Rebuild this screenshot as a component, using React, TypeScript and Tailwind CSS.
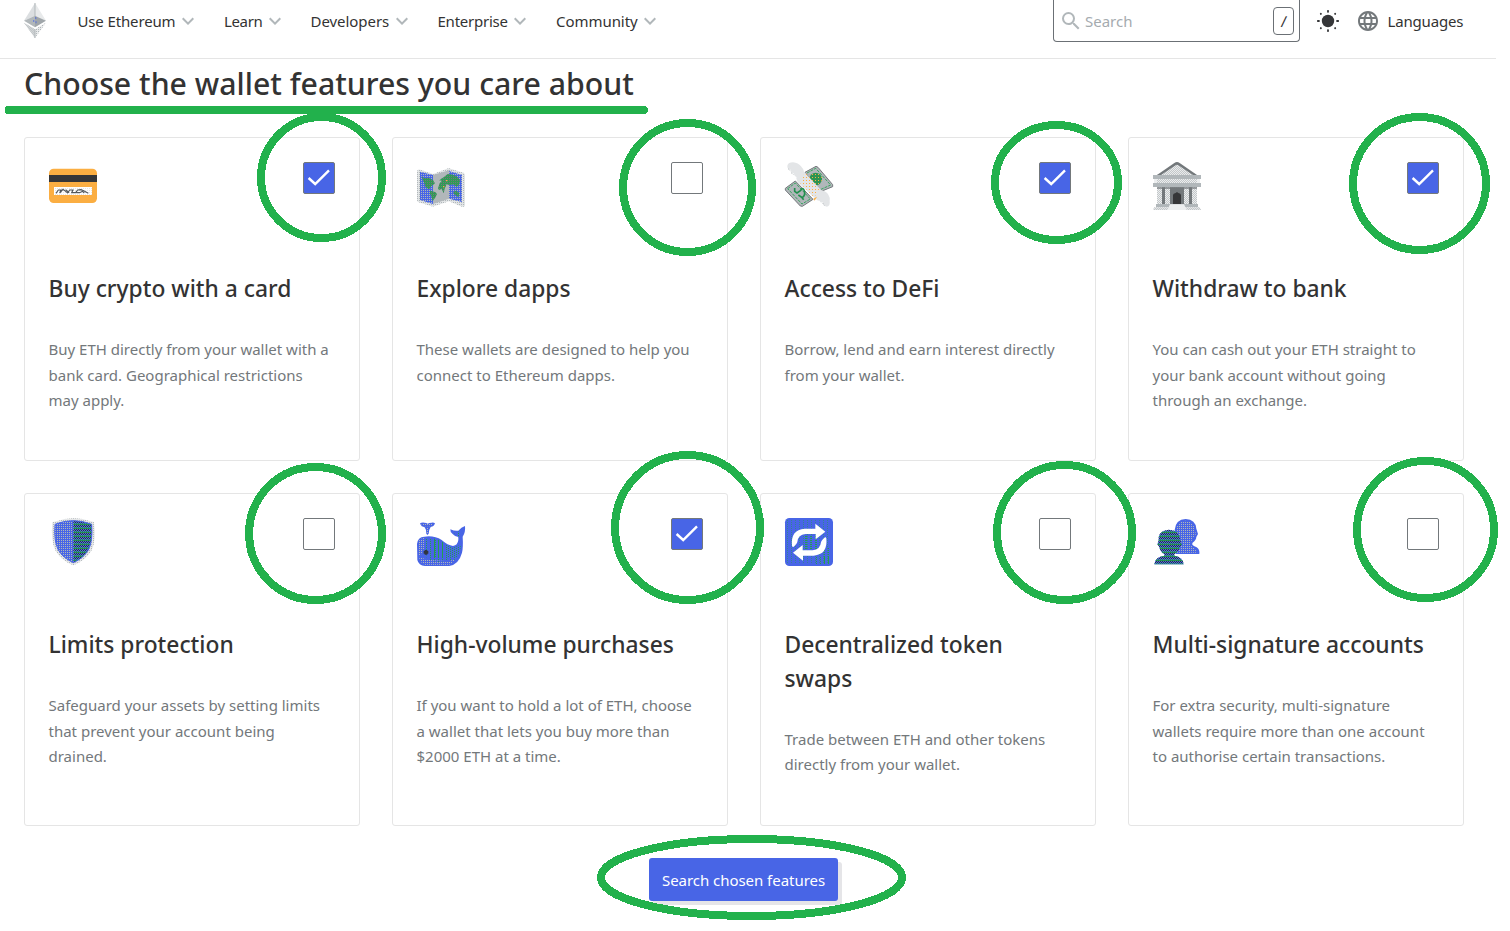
import type { ReactNode } from "react";
import { MdExpandMore, MdLanguage, MdSearch } from "react-icons/md";

/* Dot patterns shared by the emoji artwork (3 units = 1 pixel). */
function Dots({ id, color, size = 6 }: { id: string; color: string; size?: number }) {
  return (
    <pattern id={id} width={size} height={size} patternUnits="userSpaceOnUse">
      <rect width="3" height="3" fill={color} />
    </pattern>
  );
}

function Check({ id, color }: { id: string; color: string }) {
  return (
    <pattern id={id} width="6" height="6" patternUnits="userSpaceOnUse">
      <path d="M0 0h3v3H0zM3 3h3v3H3z" fill={color} />
    </pattern>
  );
}

function SharedPatterns() {
  return (
    <svg className="absolute h-0 w-0" aria-hidden="true">
      <defs>
        <Dots id="dot-gray" color="#b1b7ba" />
        <Dots id="dot-orange" color="#fbae42" size={9} />
        <Dots id="dot-steel" color="#73787b" />
        <Check id="check-gray" color="#c3c7c9" />
        <pattern id="bust-dark" width="6" height="12" patternUnits="userSpaceOnUse">
          <rect width="3" height="3" fill="#303540" />
          <rect x="3" y="3" width="3" height="3" fill="#22904e" />
          <rect y="6" width="3" height="3" fill="#22904e" />
          <rect x="3" y="6" width="3" height="3" fill="#22904e" />
          <rect x="3" y="9" width="3" height="3" fill="#303540" />
        </pattern>
      </defs>
    </svg>
  );
}

/* Dashed vertical columns of green pixels. */
function GreenColumns({ from, to, step, y1, y2 }: { from: number; to: number; step: number; y1: number; y2: number }) {
  const xs: number[] = [];
  for (let x = from; x <= to; x += step) xs.push(x);
  return (
    <g stroke="#22a04e" strokeWidth="3" strokeDasharray="3 3">
      {xs.map((x) => (
        <path key={x} d={`M${x + 1.5} ${y1}V${y2}`} />
      ))}
    </g>
  );
}

function Emoji({ children }: { children: ReactNode }) {
  return (
    <svg className="block size-12 overflow-visible" viewBox="0 0 144 144" aria-hidden="true">
      {children}
    </svg>
  );
}

const CardIcon = () => (
  <Emoji>
    <rect y="20" width="144" height="103" rx="14" fill="#fbae42" />
    <rect y="39" width="144" height="21" fill="#353638" />
    <rect x="15" y="75" width="114" height="24" fill="#fff" />
    <rect x="15" y="75" width="114" height="24" fill="url(#dot-gray)" opacity=".35" />
    <path
      d="M21 94L28 84H36L32 93L42 82L50 88L56 93L62 84H72L68 92H80L86 84L96 83L104 86L118 94M50 83L60 92M82 92H92L100 88L106 93"
      fill="none"
      stroke="#53585b"
      strokeWidth="3.4"
    />
  </Emoji>
);

const MAP_SHEET =
  "M2 24Q4 21 10 23L48 36L94 19Q97 18 101 20L139 32Q144 34 144 40V130Q143 136 135 134L96 118L51 133Q47 135 42 132L5 121Q0 119 0 114V30Z";
const MAP_LAND =
  "M14 44L24 49L34 47L48 55L54 64L42 73L36 82L26 74L20 58ZM40 86L54 90L60 96L54 108L47 117L43 101L38 95ZM63 79L68 64L75 56L67 55L82 44L92 36L106 38L118 42L129 54L126 68L119 74L109 67L96 69L89 66L83 80L80 94L74 81L66 84ZM109 90L117 86L127 93L124 105L112 97Z";

const MapIcon = () => (
  <Emoji>
    <path d={MAP_SHEET} fill="#e2e5e6" />
    <path d={MAP_SHEET} fill="url(#dot-gray)" />
    <path d="M9 29L48 39V126L9 114Z" fill="#4865e6" />
    <path d="M48 39L96 25V110L48 126Z" fill="#b1b7ba" />
    <path d="M96 27L135 39V120L96 110Z" fill="#4865e6" />
    <path d="M9 29L48 39V126L9 114ZM96 27L135 39V120L96 110Z" fill="url(#dot-gray)" />
    <path d={MAP_LAND} fill="#2f9c55" />
    <path d={MAP_LAND} fill="url(#dot-steel)" />
    <path d="M87 54h4v4h-4zM78 72h4v4h-4z" fill="#fbae42" />
  </Emoji>
);

const MoneyIcon = () => (
  <Emoji>
    <g stroke="#73787b" strokeWidth="3" strokeLinejoin="round">
      <path d="M60 31L93 13L99 16L143 68V74L106 89Z" fill="#b1b7ba" />
      <path d="M1 79L31 57L84 112L52 133L46 132L1 84Z" fill="#b1b7ba" />
    </g>
    <path
      d="M66 33L92 19L137 69L108 82M8 80L31 63L76 111L51 126Z"
      fill="none"
      stroke="#22a04e"
      strokeWidth="2.5"
      strokeDasharray="9 3"
    />
    <ellipse cx="92" cy="51" rx="19" ry="19" fill="#2c9450" />
    <ellipse cx="92" cy="51" rx="19" ry="19" fill="url(#dot-orange)" />
    <path
      d="M29 78V88L36 93L46 86Q54 74 58 86Q62 99 52 107L40 99M51 107L56 113"
      fill="none"
      stroke="#22904e"
      strokeWidth="5"
    />
    <path
      d="M7 11Q10 1 24 1Q40 3 48 13Q55 20 57 29L108 84Q124 87 130 98Q137 108 134 118Q136 132 126 134Q116 134 113 121Q106 124 104 116Q97 117 92 110L85 104L38 60Q31 44 36 46Q26 42 27 34Q17 33 17 23Q6 21 7 11Z"
      fill="#e3e5e7"
    />
    <path d="M52 40L66 36L104 84L87 106L46 64Z" fill="url(#dot-orange)" />
    <path d="M85 110L96 104L89 116Z" fill="#fbae42" />
    <path d="M9 20L17 27M18 32L27 38M113 123L119 132" stroke="#b1b7ba" strokeWidth="3" strokeDasharray="3 3" />
  </Emoji>
);

const BankIcon = () => (
  <Emoji>
    <path d="M72 5L132 39H12Z" fill="#e9ebec" />
    <path d="M72 5L132 39H12Z" fill="url(#check-gray)" />
    <path d="M12 39L64 3Q72-3 80 3L132 39H120L76 10Q72 7 68 10L24 39Z" fill="#73787b" />
    <rect x="3" y="50" width="138" height="77" fill="#eceeef" />
    <rect x="12" y="50" width="120" height="77" fill="url(#check-gray)" />
    <path d="M0 39h144v12H0zM0 63h144v12H0z" fill="#b1b7ba" />
    <path d="M0 75h12v54H0zM132 75h12v54h-12z" fill="#fff" />
    <path d="M12 75h120v6H12z" fill="#73787b" opacity=".65" />
    <path d="M27 76h9v50h-9zM51 76h42v51H51zM108 76h9v50h-9z" fill="#73787b" />
    <path d="M60 127V99Q60 95 68 93L72 90L76 93Q84 95 84 99V127Z" fill="#353638" />
    <path d="M9 126h126v10H9z" fill="#b1b7ba" />
    <path d="M4 136h136l4 8H0z" fill="#e3e5e7" />
    <path d="M4 136h136l4 8H0z" fill="url(#check-gray)" />
    <path d="M51 127h42l8 17H43z" fill="#eceeef" />
  </Emoji>
);

const SHIELD =
  "M10 13Q14 11 25 9Q45 2 73 1Q102 2 122 9Q130 10 135 13Q142 68 128 97Q110 128 73 142Q36 128 19 97Q5 68 10 13Z";

const ShieldIcon = () => (
  <Emoji>
    <path d={SHIELD} fill="#e5e7e8" />
    <path d={SHIELD} fill="url(#dot-gray)" />
    <path d="M18 19Q44 8 73 8V134Q42 120 28 96Q14 70 18 19Z" fill="#4865e6" />
    <path d="M18 19Q44 8 73 8V134Q42 120 28 96Q14 70 18 19Z" fill="url(#dot-gray)" />
    <path d="M73 8Q102 8 128 19Q132 70 118 96Q104 120 73 134Z" fill="#4865e6" />
    <path d="M73 8Q102 8 128 19Q132 70 118 96Q104 120 73 134Z" fill="url(#bust-dark)" />
    <path
      d="M18 19Q44 8 73 8Q102 8 128 19Q132 70 118 96Q104 120 73 134Q42 120 28 96Q14 70 18 19Z"
      fill="none"
      stroke="#4865e6"
      strokeWidth="3"
    />
  </Emoji>
);

const WHALE =
  "M0 78Q2 57 22 56Q52 52 74 66Q92 82 108 84Q122 82 124 66V57Q113 55 107 48Q99 42 100 34Q114 40 124 38Q133 27 144 24Q146 43 137 56Q139 86 135 104Q126 138 97 144H24Q5 143 1 126Z";

const WhaleIcon = () => (
  <Emoji>
    <clipPath id="whale-back">
      <path d="M24 62Q55 58 74 70Q96 90 112 88L132 80Q130 110 112 125L60 132L30 126ZM108 42L130 40L136 48L130 66L124 56Z" />
    </clipPath>
    <path
      d="M9 16Q14 13 22 14Q29 14 32 17Q36 14 44 14Q50 13 54 16Q52 25 41 27Q36 34 35 47L31 51L28 47Q28 34 23 28Q12 26 9 16Z"
      fill="#4865e6"
    />
    <path d="M14 17h34v8H14zM30 27h5v18h-5z" fill="url(#dot-gray)" />
    <path d={WHALE} fill="#4865e6" />
    <g clipPath="url(#whale-back)">
      <GreenColumns from={27} to={135} step={12} y1={39} y2={132} />
      <GreenColumns from={51} to={78} step={12} y1={60} y2={120} />
      <GreenColumns from={54} to={54} step={12} y1={66} y2={120} />
      <GreenColumns from={93} to={129} step={12} y1={84} y2={117} />
    </g>
    <path
      d="M3 72Q10 60 22 60V90L12 110L3 118ZM6 118L38 126L96 130L116 122Q106 140 94 140H24Q10 138 6 118Z"
      fill="url(#dot-gray)"
    />
    <path d="M23 96h8v3h3v8h-3v3h-8v-3h-3v-8h3z" fill="#303540" />
  </Emoji>
);

const SWAP_ARROW = "M21 84Q16 35 59 32H91V17L121 41L92 64V48H62Q39 50 37 72Q36 78 24 88Z";

const SwapIcon = () => (
  <Emoji>
    <rect width="144" height="144" rx="13" fill="#4865e6" />
    <g opacity=".55">
      <GreenColumns from={6} to={135} step={12} y1={6} y2={138} />
    </g>
    <GreenColumns from={60} to={99} step={15} y1={54} y2={94} />
    <GreenColumns from={63} to={99} step={15} y1={54} y2={94} />
    <GreenColumns from={93} to={135} step={12} y1={117} y2={138} />
    <GreenColumns from={117} to={135} step={12} y1={90} y2={138} />
    <g fill="#fff">
      <path d={SWAP_ARROW} />
      <path d={SWAP_ARROW} transform="rotate(180 72.5 72.5)" />
    </g>
  </Emoji>
);

const BACK = "M65 36Q68 4 98 3Q128 5 130 32L135 48L130 57Q130 66 118 75V80Q121 84 131 88Q141 95 139 108H68Z";
const FRONT =
  "M13 79L17 68Q14 38 48 35Q82 38 81 66L87 79Q81 85 80 91Q74 104 64 109V113Q90 116 92 139H4Q6 116 34 113V109Q22 102 20 91Q18 83 13 79Z";

const BustsIcon = () => (
  <Emoji>
    <path d={BACK} fill="#4865e6" />
    <path d="M70 34Q74 8 98 8Q122 10 125 34L129 48Q112 68 113 82Q128 92 133 104H72Z" fill="url(#dot-gray)" />
    <path d={FRONT} fill="#4865e6" />
    <path d={FRONT} fill="url(#bust-dark)" />
  </Emoji>
);

function EthLogo() {
  return (
    <svg className="h-[35px] w-[22px]" viewBox="0 0 66 105" aria-label="Ethereum">
      <path d="M33 0L0 53L33 38Z" fill="#dcdfe1" />
      <path d="M33 0L66 53L33 38Z" fill="#e8eaeb" />
      <path d="M33 38L0 53L33 73Z" fill="#b1b7ba" />
      <path d="M33 38L66 53L33 73Z" fill="#a0a6aa" />
      <path d="M33 42h4v6h-4zM27 51h4v6h-4zM34 55h4v6h-4z" fill="#4865e6" opacity=".6" />
      <path d="M0 59L33 79V105Z" fill="#d0d4d6" />
      <path d="M0 59L33 79V105Z" fill="url(#check-gray)" />
      <path d="M66 59L33 79V105Z" fill="#e8eaeb" />
      <path d="M66 59L33 79V105Z" fill="url(#dot-gray)" />
      <path d="M33 0V40M33 79V105" stroke="#b1b7ba" strokeWidth="3" />
    </svg>
  );
}

function SunIcon() {
  return (
    <svg className="size-[22px]" viewBox="0 0 22 22" fill="#353638" aria-hidden="true">
      <circle cx="11" cy="11" r="6.2" />
      {[0, 45, 90, 135, 180, 225, 270, 315].map((a) => (
        <rect
          key={a}
          x="10.1"
          y="0"
          width="1.8"
          height={a % 90 ? 1.8 : 2.8}
          rx=".7"
          transform={`rotate(${a} 11 11)`}
        />
      ))}
    </svg>
  );
}

function NavItem({ label, className }: { label: string; className: string }) {
  return (
    <a className={`flex h-6 shrink-0 items-center whitespace-nowrap ${className}`}>
      {label}
      <MdExpandMore className="ml-[0.5px] size-6 shrink-0 text-[#b1b7ba]" />
    </a>
  );
}

function Header() {
  return (
    <header className="flex h-[59px] w-[1496px] items-start border-b border-[#e5e5e5] pl-6 text-[15px] text-[#333]">
      <div className="mt-[3px] w-[53.5px]">
        <EthLogo />
      </div>
      <nav className="mt-[9px] flex">
        <NavItem label="Use Ethereum" className="w-[146.5px] tracking-[-0.14px]" />
        <NavItem label="Learn" className="w-[86.5px] tracking-[-0.36px]" />
        <NavItem label="Developers" className="w-[127px] tracking-[-0.05px]" />
        <NavItem label="Enterprise" className="w-[118.5px] tracking-[-0.24px]" />
        <NavItem label="Community" className="w-[110px] tracking-[-0.05px]" />
      </nav>
      <div className="ml-auto flex h-[42px] w-[247px] items-center rounded-b border border-t-0 border-[#6b7075] pr-[5px] pl-[5px]">
        <MdSearch className="size-6 text-[#b1b7ba]" />
        <span className="mt-0.5 ml-0.5 flex-1 text-[#a5abaf]">Search</span>
        <kbd className="mt-px flex h-7 w-[21px] items-center justify-center rounded border border-[#6b7075] pt-px font-['Noto_Sans',sans-serif] text-[15px]">
          <span className="inline-block -skew-x-6">/</span>
        </kbd>
      </div>
      <div className="mt-[9px] mr-8 ml-[17px] flex h-6 items-center">
        <SunIcon />
        <MdLanguage className="ml-[17px] size-6 text-[#73787b]" />
        <span className="ml-[7.5px] w-[76.5px] tracking-[-0.18px]">Languages</span>
      </div>
    </header>
  );
}

function Checkbox({ checked }: { checked: boolean }) {
  return (
    <span
      role="checkbox"
      aria-checked={checked}
      className={`flex size-8 items-center justify-center rounded-[2px] border border-[#73787b] ${checked ? "bg-[#4865e6]" : "bg-white"}`}
    >
      {checked && (
        <svg
          className="-mt-px h-[17px] w-[24px]"
          viewBox="0 0 24 17"
          fill="none"
          stroke="#fff"
          strokeWidth="2.4"
          aria-hidden="true"
        >
          <path d="M1.6 9L8.2 15L22 1.4" />
        </svg>
      )}
    </span>
  );
}

type Feature = { icon: ReactNode; title: string[]; lines: string[]; checked: boolean };

const features: Feature[] = [
  {
    icon: <CardIcon />,
    title: ["Buy crypto with a card"],
    lines: ["Buy ETH directly from your wallet with a", "bank card. Geographical restrictions", "may apply."],
    checked: true,
  },
  {
    icon: <MapIcon />,
    title: ["Explore dapps"],
    lines: ["These wallets are designed to help you", "connect to Ethereum dapps."],
    checked: false,
  },
  {
    icon: <MoneyIcon />,
    title: ["Access to DeFi"],
    lines: ["Borrow, lend and earn interest directly", "from your wallet."],
    checked: true,
  },
  {
    icon: <BankIcon />,
    title: ["Withdraw to bank"],
    lines: ["You can cash out your ETH straight to", "your bank account without going", "through an exchange."],
    checked: true,
  },
  {
    icon: <ShieldIcon />,
    title: ["Limits protection"],
    lines: ["Safeguard your assets by setting limits", "that prevent your account being", "drained."],
    checked: false,
  },
  {
    icon: <WhaleIcon />,
    title: ["High-volume purchases"],
    lines: ["If you want to hold a lot of ETH, choose", "a wallet that lets you buy more than", "$2000 ETH at a time."],
    checked: true,
  },
  {
    icon: <SwapIcon />,
    title: ["Decentralized token", "swaps"],
    lines: ["Trade between ETH and other tokens", "directly from your wallet."],
    checked: false,
  },
  {
    icon: <BustsIcon />,
    title: ["Multi-signature accounts"],
    lines: ["For extra security, multi-signature", "wallets require more than one account", "to authorise certain transactions."],
    checked: false,
  },
];

function FeatureCard({ icon, title, lines, checked }: Feature) {
  return (
    <article className="flex flex-col rounded-[3px] border border-[#e5e5e5] px-6 pt-6">
      <div className="flex items-start justify-between">
        {icon}
        <Checkbox checked={checked} />
      </div>
      <h3 className="mt-[62px] -ml-[0.5px] text-[22.8px] leading-[33.6px] font-medium whitespace-nowrap text-[#333]">
        {title.map((t) => (
          <span key={t} className="block">
            {t}
          </span>
        ))}
      </h3>
      <p className="mt-[31.6px] -ml-[0.5px] text-[15px] leading-[25.6px] whitespace-nowrap text-[#73787b]">
        {lines.map((l) => (
          <span key={l} className="block">
            {l}
          </span>
        ))}
      </p>
    </article>
  );
}

/* Hand-drawn highlights: [cx, cy, rx, ry] */
const rings = [
  [321.5, 177.5, 60.5, 60.5],
  [687.5, 187.5, 64.5, 64.5],
  [1056.5, 182.5, 61.5, 57.5],
  [1419.5, 183.5, 66.5, 66.5],
  [315.5, 533.5, 66.5, 66.5],
  [687.5, 527.5, 72.5, 72.5],
  [1064.5, 532.5, 67.5, 67.5],
  [1425.5, 529.5, 68.5, 68.5],
  [751.5, 877.5, 150.5, 38.5],
];

function Annotations() {
  return (
    <svg
      className="pointer-events-none absolute top-0 left-0"
      width="1510"
      height="931"
      fill="none"
      stroke="#22b14c"
      strokeWidth="8"
      shapeRendering="crispEdges"
      aria-hidden="true"
    >
      <path d="M8.5 110H644" strokeLinecap="round" />
      {rings.map(([cx, cy, rx, ry]) => (
        <ellipse key={`${cx}-${cy}`} cx={cx} cy={cy} rx={rx} ry={ry} />
      ))}
    </svg>
  );
}

export default function App() {
  return (
    <div className="relative h-[931px] w-[1510px] overflow-hidden bg-white font-['Noto_Sans','Open_Sans',sans-serif]">
      <SharedPatterns />
      <Header />
      <main className="px-6">
        <h2 className="h-[78px] text-[30.25px] leading-[50px] font-medium text-[#333]">
          Choose the wallet features you care about
        </h2>
        <section className="grid w-[1440px] grid-cols-4 grid-rows-[324px_333px] gap-8">
          {features.map((f) => (
            <FeatureCard key={f.title[0]} {...f} />
          ))}
        </section>
        <div className="mt-8 flex w-[1439px] justify-center">
          <button className="h-[43px] w-[189px] rounded-[3px] bg-[#4865e6] pt-0.5 text-[15px] tracking-[-0.04px] whitespace-nowrap text-white shadow-[4px_4px_0_#e5e5e8]">
            Search chosen features
          </button>
        </div>
      </main>
      <Annotations />
    </div>
  );
}
